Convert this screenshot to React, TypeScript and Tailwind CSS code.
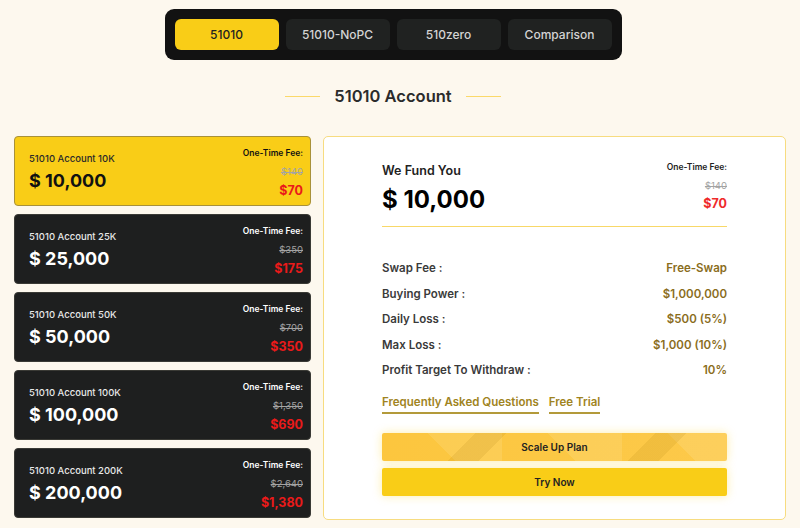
import { useState } from "react";

interface Plan {
  label: string;
  amount: string;
  oldFee: string;
  fee: string;
}

const plans: Plan[] = [
  { label: "51010 Account 10K", amount: "$ 10,000", oldFee: "$140", fee: "$70" },
  { label: "51010 Account 25K", amount: "$ 25,000", oldFee: "$350", fee: "$175" },
  { label: "51010 Account 50K", amount: "$ 50,000", oldFee: "$700", fee: "$350" },
  { label: "51010 Account 100K", amount: "$ 100,000", oldFee: "$1,350", fee: "$690" },
  { label: "51010 Account 200K", amount: "$ 200,000", oldFee: "$2,640", fee: "$1,380" },
];

const tabs = ["51010", "51010-NoPC", "510zero", "Comparison"];

const rules = [
  { label: "Swap Fee :", value: "Free-Swap" },
  { label: "Buying Power :", value: "$1,000,000" },
  { label: "Daily Loss :", value: "$500 (5%)" },
  { label: "Max Loss :", value: "$1,000 (10%)" },
  { label: "Profit Target To Withdraw :", value: "10%" },
];

export default function App() {
  const [tab, setTab] = useState(0);
  const [selected, setSelected] = useState(0);

  return (
    <div
      className="min-h-[528px] w-[800px] bg-[#fdf8ee] text-[#222]"
      style={{ fontFamily: "Inter, 'Open Sans', sans-serif" }}
    >
      <div className="flex justify-center pr-[14px] pt-[9px]">
        <div className="flex gap-[7px] rounded-[9px] bg-[#121212] p-[10px]">
          {tabs.map((t, i) => (
            <button
              key={t}
              onClick={() => setTab(i)}
              className={`h-[31px] w-[104px] rounded-[6px] text-[12px] font-medium ${
                tab === i ? "bg-[#f9cd17] text-[#222]" : "bg-[#202221] text-[#d4d4d4]"
              }`}
            >
              {t}
            </button>
          ))}
        </div>
      </div>

      <div className="mt-[24px] flex items-center justify-center gap-[14px] pr-[14px]">
        <div className="h-[1.5px] w-[35px] bg-[#fbd96a]" />
        <h2 className="text-[16.5px] font-semibold text-[#2b2b2b]">51010 Account</h2>
        <div className="h-[1.5px] w-[35px] bg-[#fbd96a]" />
      </div>

      <div className="mt-[27px] flex gap-[12px] pl-[14px]">
        <div className="flex w-[297px] flex-col gap-[8px]">
          {plans.map((p, i) => {
            const active = selected === i;
            return (
              <button
                key={p.label}
                onClick={() => setSelected(i)}
                className={`flex h-[70px] items-start justify-between rounded-[4px] border pl-[14px] pr-[7px] text-left ${
                  active ? "border-[#a8913a] bg-[#f9cd17] text-[#111]" : "border-[#3a3a35] bg-[#1e1f1f] text-white"
                }`}
              >
                <div className="pt-[15px]">
                  <p className={`text-[9.5px] font-medium ${active ? "text-[#2a2a2a]" : "text-[#e8e8e8]"}`}>{p.label}</p>
                  <p className="mt-[2px] text-[18px] font-bold leading-[26px]">{p.amount}</p>
                </div>
                <div className="flex flex-col items-end pt-[11px]">
                  <p className="text-[8.5px] font-semibold leading-[10px]">One-Time Fee:</p>
                  <p className="mt-[8px] text-[9.5px] leading-[12px] text-[#a3a3a3] line-through">{p.oldFee}</p>
                  <p className="mt-[6px] text-[12.5px] font-bold leading-[14px] text-[#ea1a1a]">{p.fee}</p>
                </div>
              </button>
            );
          })}
        </div>

        <div className="h-[384px] w-[463px] rounded-[5px] border border-[#f7dc80] bg-white px-[58px] pt-[25px]">
          <div className="flex items-start justify-between">
            <div>
              <p className="text-[12.5px] font-semibold text-[#222]">We Fund You</p>
              <p className="mt-[3px] text-[24px] font-bold leading-[32px] text-black">$ {plans[selected].amount.slice(2)}</p>
            </div>
            <div className="flex flex-col items-end">
              <p className="text-[8.5px] font-semibold leading-[10px] text-[#222]">One-Time Fee:</p>
              <p className="mt-[8px] text-[9.5px] leading-[12px] text-[#a3a3a3] line-through">{plans[selected].oldFee}</p>
              <p className="mt-[5px] text-[12.5px] font-bold leading-[14px] text-[#ef2b2b]">{plans[selected].fee}</p>
            </div>
          </div>
          <div className="mt-[10px] h-[1.5px] bg-[#f8d868]" />

          <div className="mt-[34px] flex flex-col gap-[10.5px]">
            {rules.map((r) => (
              <div key={r.label} className="flex items-center justify-between text-[11.5px] font-semibold leading-[15px]">
                <span className="text-[#3a3a3a]">{r.label}</span>
                <span className="text-[#8a6d1c]">{r.value}</span>
              </div>
            ))}
          </div>

          <div className="mt-[16px] flex gap-[10px] text-[11.5px] font-semibold text-[#a0841e]">
            <a className="border-b-2 border-[#b39a3a] pb-[1px]">Frequently Asked Questions</a>
            <a className="border-b-2 border-[#b39a3a] pb-[1px]">Free Trial</a>
          </div>

          <div className="mt-[19px] flex flex-col gap-[7px]">
            <button
              className="relative h-[28px] overflow-hidden rounded-[2px] text-[10px] font-semibold text-[#222] shadow-[0_0_10px_rgba(249,205,23,0.35)]"
              style={{
                backgroundImage:
                  "linear-gradient(135deg, rgba(0,0,0,0) 45%, rgba(160,110,0,0.12) 45%, rgba(160,110,0,0.12) 60%, rgba(0,0,0,0) 60%), linear-gradient(45deg, rgba(255,255,255,0) 50%, rgba(255,255,255,0.1) 50%), linear-gradient(90deg, #fcc63e, #fcc845 60%, #fdc94a)",
                backgroundSize: "180px 28px, 120px 28px, 100% 100%",
              }}
            >
              Scale Up Plan
            </button>
            <button className="h-[28px] rounded-[2px] bg-[#f9cd17] text-[10px] font-semibold text-[#222] shadow-[0_0_10px_rgba(249,205,23,0.35)]">
              Try Now
            </button>
          </div>
        </div>
      </div>
    </div>
  );
}
